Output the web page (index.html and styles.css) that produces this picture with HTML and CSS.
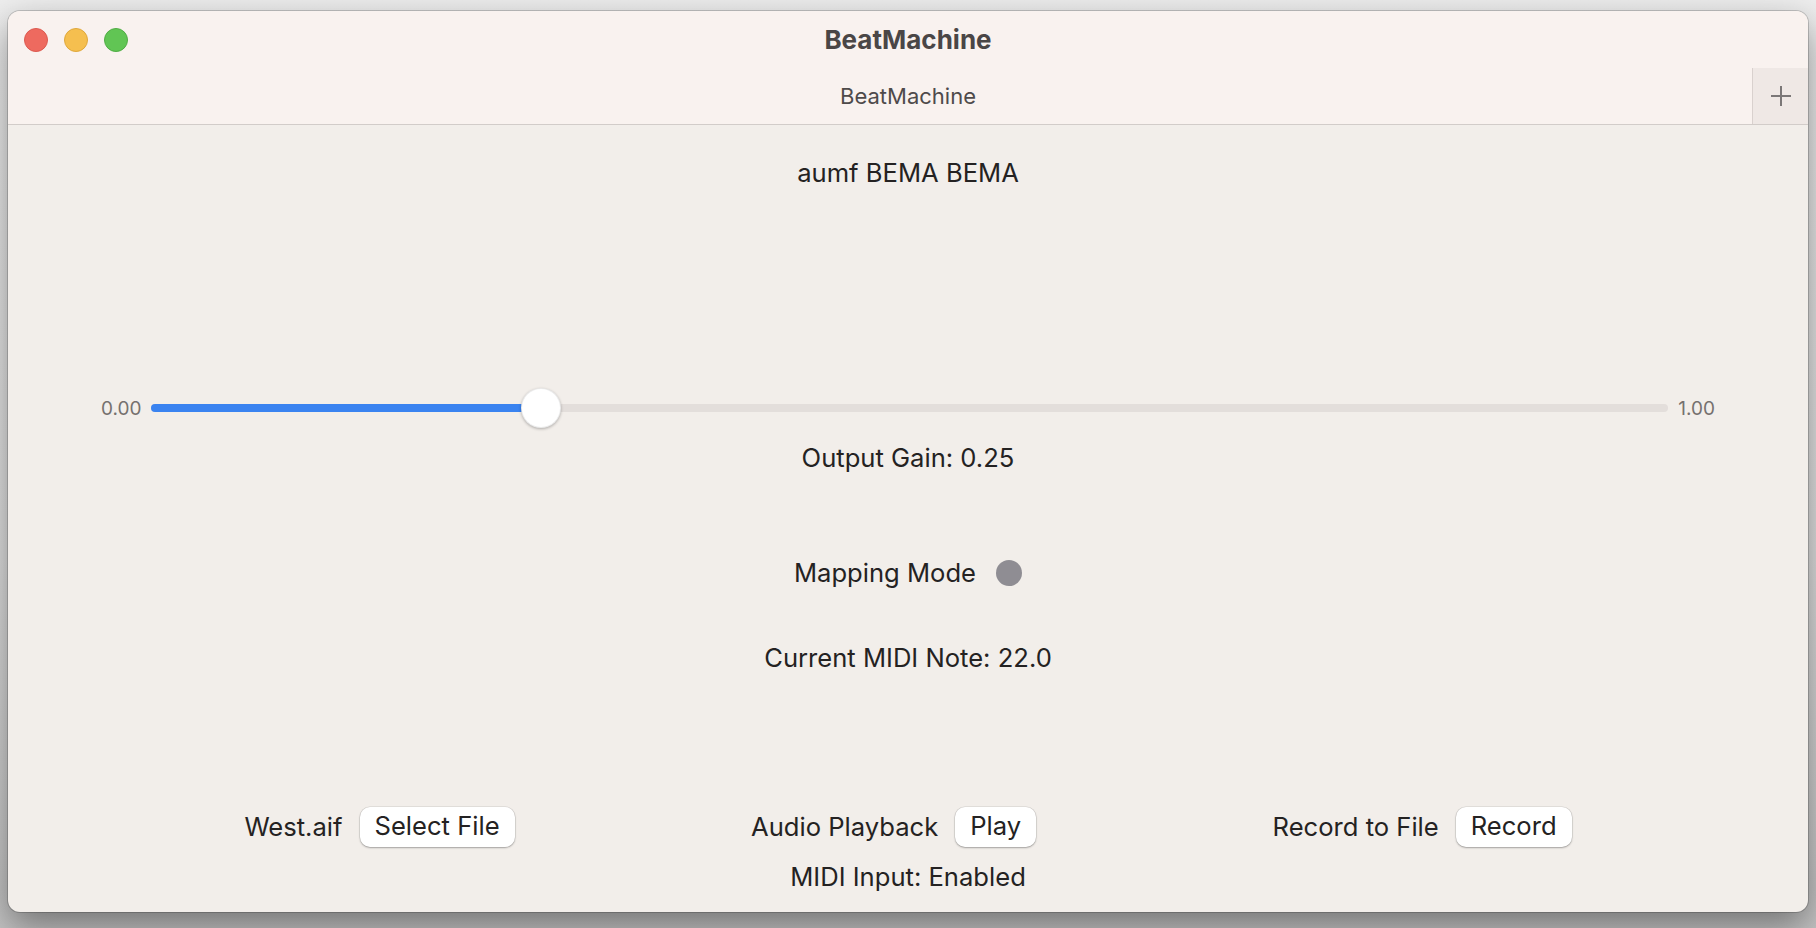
FILE: index.html
```html
<!DOCTYPE html>
<html>
<head>
<meta charset="utf-8">
<title>BeatMachine</title>
<link rel="stylesheet" href="styles.css">
</head>
<body>
<div class="window">
  <div class="titlebar">
    <div class="lights">
      <span class="light red"></span>
      <span class="light yellow"></span>
      <span class="light green"></span>
    </div>
    <div class="title">BeatMachine</div>
    <div></div>
  </div>
  <div class="tabbar">
    <div></div>
    <div class="tab">BeatMachine</div>
    <div class="newtab">
      <svg width="24" height="24" viewBox="0 0 24 24"><path d="M12 2V22M2 12H22" stroke="#7b7777" stroke-width="2" fill="none"/></svg>
    </div>
  </div>
  <div class="content">
    <div class="text name">aumf BEMA BEMA</div>
    <div class="slider-row">
      <span class="slider-label">0.00</span>
      <div class="track">
        <div class="fill" style="--value:0.25"><span class="thumb"></span></div>
      </div>
      <span class="slider-label">1.00</span>
    </div>
    <div class="text gain">Output Gain: 0.25</div>
    <div class="mapping">
      <span class="text">Mapping Mode</span>
      <span class="dot"></span>
    </div>
    <div class="text note">Current MIDI Note: 22.0</div>
    <div class="controls">
      <div class="group"><span class="text">West.aif</span><button class="btn">Select File</button></div>
      <div class="group"><span class="text">Audio Playback</span><button class="btn">Play</button></div>
      <div class="group"><span class="text">Record to File</span><button class="btn">Record</button></div>
    </div>
    <div class="text midi">MIDI Input: Enabled</div>
  </div>
</div>
</body>
</html>
```
FILE: styles.css
```css
html, body {
  margin: 0;
  height: 100%;
}
body {
  background: linear-gradient(#eeeeee, #e0e0e0 60%, #c4c4c4);
  padding: 11px 8px 0 8px;
  box-sizing: border-box;
  font-family: Inter, "Noto Sans", sans-serif;
  overflow: hidden;
}
.window {
  height: 901px;
  display: flex;
  flex-direction: column;
  border-radius: 12px;
  overflow: hidden;
  background: #f2eeea;
  box-shadow: 0 0 0 1px rgba(0,0,0,0.18), 0 14px 36px rgba(0,0,0,0.42);
}
.titlebar {
  height: 57px;
  background: #f9f2ef;
  display: grid;
  grid-template-columns: 1fr auto 1fr;
  align-items: center;
}
.lights {
  display: flex;
  gap: 16px;
  padding-left: 16px;
}
.light {
  width: 24px;
  height: 24px;
  border-radius: 50%;
  box-sizing: border-box;
}
.red { background: #ee6a5f; border: 1px solid #dc5a50; }
.yellow { background: #f5bf4f; border: 1px solid #dfa83c; }
.green { background: #61c554; border: 1px solid #50ad45; }
.title {
  font-weight: 700;
  font-size: 26px;
  color: #4a4646;
  line-height: 32px;
}
.tabbar {
  height: 56px;
  background: #f9f2ef;
  border-bottom: 1px solid #d2ccc9;
  display: grid;
  grid-template-columns: 56px 1fr 56px;
  align-items: stretch;
}
.tab {
  display: flex;
  align-items: center;
  justify-content: center;
  font-size: 22px;
  color: #4e4a4a;
}
.newtab {
  background: #efe8e5;
  border-left: 1px solid #d9d1ce;
  display: flex;
  align-items: center;
  justify-content: center;
}
.content {
  flex: 1;
  display: flex;
  flex-direction: column;
  align-items: stretch;
  color: #242222;
}
.text {
  font-size: 25.6px;
  line-height: 32px;
  text-align: center;
  color: #242222;
  white-space: nowrap;
}
.name { margin-top: 32px; }
.slider-row {
  margin-top: 199px;
  height: 40px;
  display: flex;
  align-items: center;
  padding: 0 93px;
  gap: 10px;
}
.slider-label {
  font-size: 19px;
  color: #76716f;
}
.track {
  flex: 1;
  height: 8px;
  border-radius: 4px;
  background: #e3dedb;
  position: relative;
}
.fill {
  height: 8px;
  border-radius: 4px;
  background: #3a83f0;
  width: calc(20px + var(--value) * (100% - 40px));
  position: relative;
}
.thumb {
  position: absolute;
  right: -20px;
  top: -16px;
  width: 40px;
  height: 40px;
  border-radius: 50%;
  background: #ffffff;
  box-sizing: border-box;
  border: 1px solid rgba(0,0,0,0.08);
  box-shadow: 0 1px 3px rgba(0,0,0,0.28);
}
.gain { margin-top: 14px; }
.mapping {
  margin-top: 83px;
  display: flex;
  justify-content: center;
  align-items: center;
  gap: 20px;
}
.dot {
  width: 26px;
  height: 26px;
  border-radius: 50%;
  background: #8f8d93;
}
.note { margin-top: 53px; }
.controls {
  margin-top: 133px;
  display: flex;
  justify-content: space-evenly;
  align-items: center;
  height: 40px;
}
.group {
  display: flex;
  align-items: center;
  gap: 17px;
}
.btn {
  font-family: inherit;
  font-size: 25.6px;
  color: #242222;
  background: #ffffff;
  border: none;
  height: 40px;
  padding: 0 15px 3px;
  border-radius: 10px;
  box-shadow: 0 0 0 0.5px rgba(0,0,0,0.12), 0 1px 2px rgba(0,0,0,0.28);
}
.midi { margin-top: 14px; }
```
